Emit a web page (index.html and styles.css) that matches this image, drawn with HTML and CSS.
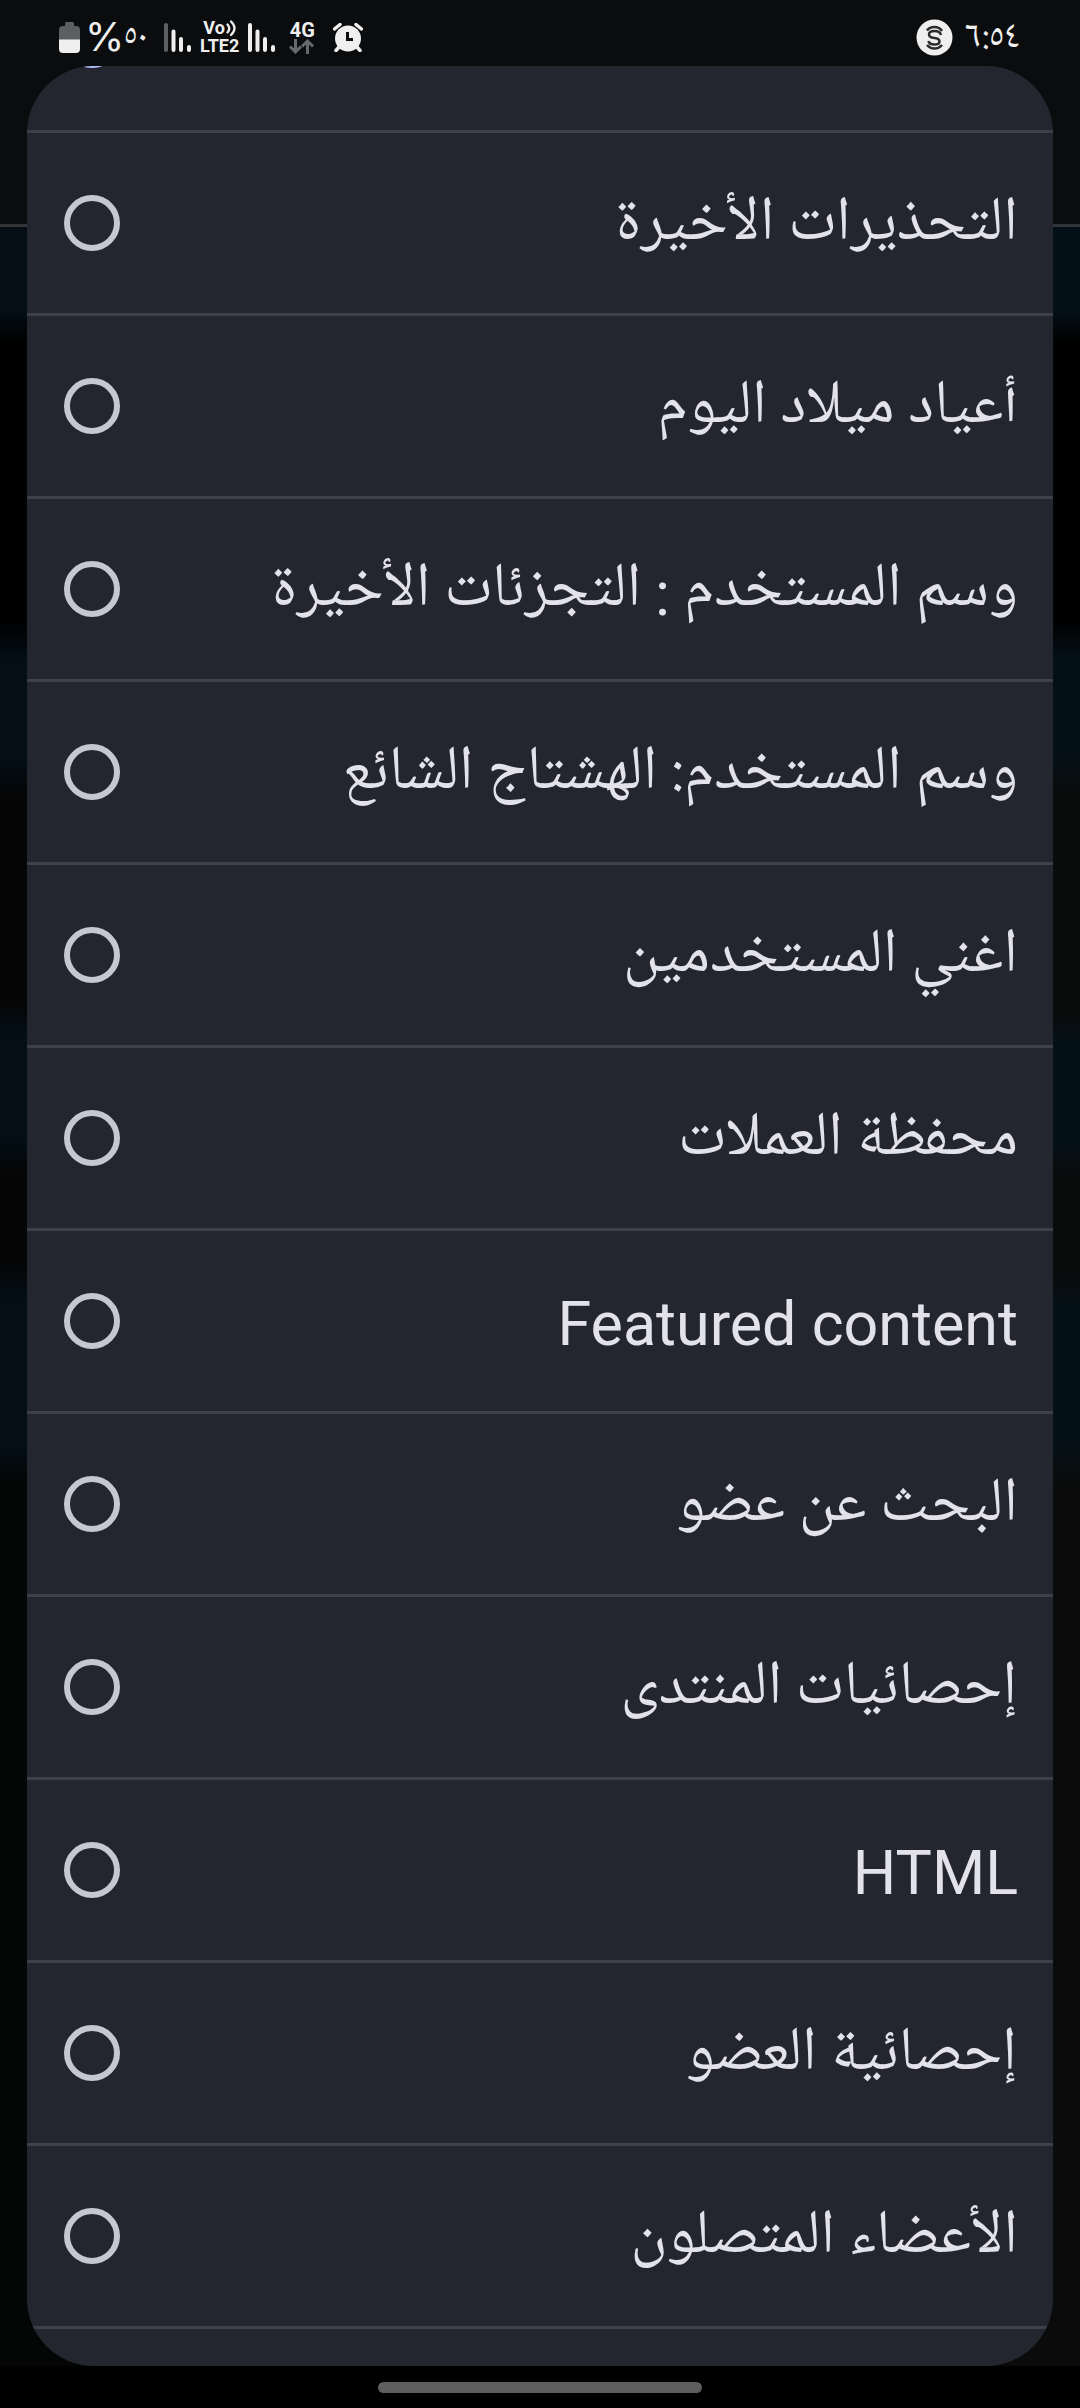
FILE: index.html
```html
<!DOCTYPE html>
<html lang="ar" dir="rtl">
<head>
<meta charset="utf-8">
<meta name="viewport" content="width=device-width, initial-scale=1">
<title>HTML</title>
<link rel="stylesheet" href="styles.css">
</head>
<body>
<header class="status" dir="ltr">
  <div class="status-group">
    <svg class="battery" width="21" height="31" viewBox="0 0 21 31" aria-hidden="true">
      <path d="M6 1.500Q6 0 7.500 0h6Q15 0 15 1.500V4h2q4 0 4 4v10H0V8q0-4 4-4h2z" fill="#5d5e5f"/>
      <path d="M0 17.500h21V27q0 4-4 4H4q-4 0-4-4z" fill="#efefef"/>
    </svg>
    <span class="percent">%</span><span class="level">٥٠</span>
    <svg class="bars" width="27" height="29" viewBox="0 0 27 29" fill="none" stroke="#efefef" stroke-width="4" stroke-linecap="round" aria-hidden="true">
      <path d="M2 2v25" stroke="#5d5e5f"/><path d="M9.500 8.500V27M17 16v11M25 24v3"/>
    </svg>
    <div class="volte">
      <span class="vo">Vo<svg width="10" height="16" viewBox="0 0 10 16" fill="none" stroke="#efefef" stroke-width="2.300" stroke-linecap="round" aria-hidden="true"><path d="M1.500 4.500q3.500 4 0 8M5 1.500q7 6.500 0 13.500"/></svg></span>
      <span>LTE2</span>
    </div>
    <svg class="bars" width="27" height="29" viewBox="0 0 27 29" fill="none" stroke="#efefef" stroke-width="4" stroke-linecap="round" aria-hidden="true">
      <path d="M2 2v25M9.500 8.500V27M17 16v11M25 24v3"/>
    </svg>
    <div class="network">
      <span>4G</span>
      <svg width="26" height="15" viewBox="0 0 26 15" fill="none" stroke="#68696a" stroke-width="3" aria-hidden="true"><path d="M6.500 0v13M1 7.500l5.500 5.500L12 7.500M18.500 15V2M13 7.500L18.500 2 24 7.500"/></svg>
    </div>
    <svg class="alarm" width="30" height="29" viewBox="0 0 30 29" aria-hidden="true">
      <path d="M1.500 6L7 1.500M28.500 6L23 1.500M6 24l-3 3.500M24 24l3 3.500" stroke="#efefef" stroke-width="3.500" stroke-linecap="round"/>
      <circle cx="15" cy="15.500" r="13" fill="#efefef"/>
      <path d="M14.500 9v7.500H20" fill="none" stroke="#0b0c0e" stroke-width="3"/>
    </svg>
  </div>
  <div class="status-group">
    <svg class="badge" width="37" height="37" viewBox="0 0 37 37" fill="none" aria-hidden="true">
      <circle cx="18.500" cy="18.500" r="18" fill="#efefef"/>
      <g stroke="#2b2b2b" stroke-width="2.500">
        <path d="M25 16q-1-4-6.500-4-5.500 0-5.500 3.500 0 3 5.500 3.500 5 .5 5 3.500 0 3-5 3-5.500 0-6-3.500"/>
        <path d="M11 11.500q2.500-3.500 7.500-3.500t7.500 4M11 26q3 3.500 7.500 3.500T26 26"/>
      </g>
    </svg>
    <time class="clock">٦:٥٤</time>
  </div>
</header>

<main class="sheet">
  <ul class="options">
    <li class="option"><input type="radio" name="block" aria-label="block" checked></li>
    <li class="option"><label for="o1">التحذيرات الأخيرة</label><input type="radio" name="block" id="o1"></li>
    <li class="option"><label for="o2">أعياد ميلاد اليوم</label><input type="radio" name="block" id="o2"></li>
    <li class="option"><label for="o3">وسم المستخدم <span class="colon">:</span> التجزئات الأخيرة</label><input type="radio" name="block" id="o3"></li>
    <li class="option"><label for="o4">وسم المستخدم: الهشتاج الشائع</label><input type="radio" name="block" id="o4"></li>
    <li class="option"><label for="o5">اغني المستخدمين</label><input type="radio" name="block" id="o5"></li>
    <li class="option"><label for="o6">محفظة العملات</label><input type="radio" name="block" id="o6"></li>
    <li class="option"><label for="o7" class="latin" lang="en">Featured content</label><input type="radio" name="block" id="o7"></li>
    <li class="option"><label for="o8">البحث عن عضو</label><input type="radio" name="block" id="o8"></li>
    <li class="option"><label for="o9">إحصائيات المنتدى</label><input type="radio" name="block" id="o9"></li>
    <li class="option"><label for="o10" class="latin" lang="en">HTML</label><input type="radio" name="block" id="o10"></li>
    <li class="option"><label for="o11">إحصائية العضو</label><input type="radio" name="block" id="o11"></li>
    <li class="option"><label for="o12">الأعضاء المتصلون</label><input type="radio" name="block" id="o12"></li>
    <li class="option"></li>
  </ul>
</main>

<footer class="nav"><div class="handle"></div></footer>
</body>
</html>
```
FILE: styles.css
```css
* { box-sizing: border-box; }

body {
  margin: 0;
  height: 100vh;
  display: flex;
  flex-direction: column;
  overflow: hidden;
  color: #e3e1e9;
  font-family: "Noto Naskh Arabic UI", "Noto Naskh Arabic", Roboto, sans-serif;
  /* dimmed page behind the sheet */
  background-color: #060606;
  background-image:
    linear-gradient(#0b0c0e 224px, #333437 224px, #333437 227px, #030e15 227px, #030e15 310px, #000 345px, #000 620px, #030e15 660px, #030e15 760px, #050505 800px, #050505 1000px, #030e15 1035px, #030e15 1140px, #050505 1175px, #050505 1260px, #030e15 1300px, #030e15 1445px, #040505 1485px),
    linear-gradient(#0b0c0e 224px, #333437 224px, #333437 227px, #041017 227px, #041017 310px, #000 345px, #000 620px, #041017 660px, #041017 750px, #0a0b0b 800px, #0a0b0b 1010px, #041017 1045px, #041017 1140px, #0a0b0b 1180px, #0a0b0b 1270px, #041017 1310px, #041017 1440px, #0b0b0b 1490px);
  background-size: 50% 100%;
  background-position: left, right;
  background-repeat: no-repeat;
}

.status {
  height: 66px;
  flex: none;
  display: flex;
  justify-content: space-between;
  padding: 8px 60px 0 59px;
  color: #efefef;
}

.status-group {
  display: flex;
  align-items: center;
}

.status-group svg { display: block; flex: none; }

.percent {
  margin-left: 5px;
  font: 40px/40px Inter, sans-serif;
}

.level {
  font-size: 34px;
  line-height: 40px;
}

.bars { margin: 0 9px; }
.level + .bars { margin-left: 16px; }

.volte,
.network {
  font: 700 18px/18px Roboto, sans-serif;
}

.volte {
  display: flex;
  flex-direction: column;
  align-items: center;
}

.vo {
  display: flex;
  align-items: center;
  gap: 1px;
}

.network {
  display: flex;
  flex-direction: column;
  align-items: center;
  margin: 0 18px 0 5px;
  font-size: 20px;
}

.badge { margin-right: 12px; }

.clock {
  font-size: 38px;
  line-height: 40px;
}

.sheet {
  flex: 1;
  min-height: 0;
  overflow: hidden;
  margin: 0 27px;
  border-radius: 67px;
  background: #24262f;
}

/* list is scrolled part way through its first row */
.options {
  margin: -119px 0 0;
  padding: 0;
  list-style: none;
}

.option {
  height: 183px;
  display: flex;
  align-items: center;
  justify-content: space-between;
  padding: 0 35px 0 37px;
  border-top: 3px solid #3e4049;
}

.option label {
  font-size: 62px;
  line-height: 106px;
}

.option .latin,
.colon {
  font-family: Roboto, sans-serif;
}

.option .latin {
  padding-top: 6px;
  font-size: 61px;
}

.colon {
  line-height: 1;
  vertical-align: -2px;
}

.option input {
  appearance: none;
  width: 56px;
  height: 56px;
  flex: none;
  margin: 0 auto 0 0;
  border: 6px solid #c5c8d0;
  border-radius: 50%;
}

.option input:checked { border-color: #b3c5ff; }

.nav {
  height: 42px;
  flex: none;
  display: flex;
  justify-content: center;
  padding-top: 16px;
  background: #000;
}

.handle {
  width: 30%;
  height: 11px;
  border-radius: 6px;
  background: #5e5e5e;
}
```
